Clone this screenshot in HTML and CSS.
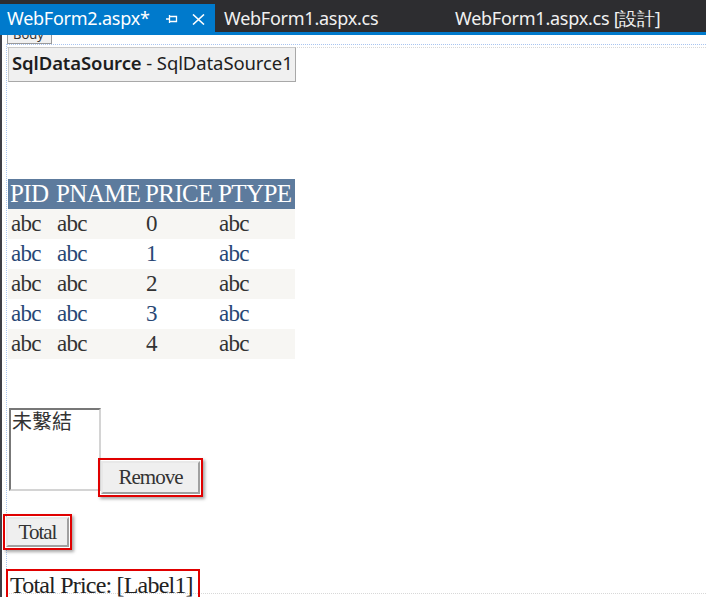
FILE: index.html
```
<!DOCTYPE html>
<html>
<head>
<meta charset="utf-8">
<link rel="stylesheet" href="styles.css">
</head>
<body>
<div class="tabbar">
  <div class="tab tab-active">
    <span class="tab-title">WebForm2.aspx*</span>
    <svg class="pin" width="12" height="10" viewBox="0 0 12 10"><path d="M0 5h3M3.5 1v8M4 2.5h6.5v5H4" fill="none" stroke="#fff" stroke-width="1.3"/></svg>
    <svg class="close" width="13" height="11" viewBox="0 0 13 11"><path d="M1 0.5L12 10.5M12 0.5L1 10.5" stroke="#fff" stroke-width="1.6" fill="none"/></svg>
  </div>
  <div class="tab tab-two">WebForm1.aspx.cs</div>
  <div class="tab tab-three">WebForm1.aspx.cs [設計]</div>
</div>
<div class="designer">
  <div class="tag-body"><span class="tag-text">Body</span></div>
  <div class="surface">
    <div class="surface-inner">
      <div class="sqlds"><b>SqlDataSource</b> - SqlDataSource1</div>
      <table class="grid">
        <colgroup><col class="c1"><col class="c2"><col class="c3"><col class="c4"></colgroup>
        <tr class="head"><th>PID</th><th>PNAME</th><th>PRICE</th><th>PTYPE</th></tr>
        <tr class="odd"><td>abc</td><td>abc</td><td>0</td><td>abc</td></tr>
        <tr class="even"><td>abc</td><td>abc</td><td>1</td><td>abc</td></tr>
        <tr class="odd"><td>abc</td><td>abc</td><td>2</td><td>abc</td></tr>
        <tr class="even"><td>abc</td><td>abc</td><td>3</td><td>abc</td></tr>
        <tr class="odd"><td>abc</td><td>abc</td><td>4</td><td>abc</td></tr>
      </table>
      <div class="list-row">
        <div class="listbox">未繫結</div>
        <span class="sel sel-remove"><span class="btn btn-remove">Remove</span></span>
      </div>
      <div class="total-row">
        <span class="sel sel-total"><span class="btn btn-total">Total</span></span>
      </div>
      <div class="label-row">
        <span class="sel sel-label">Total Price: [Label1]</span>
      </div>
    </div>
  </div>
</div>
</body>
</html>
```
FILE: styles.css
```
html, body {
  margin: 0;
  padding: 0;
  background: #fff;
}
body {
  width: 706px;
  height: 597px;
  overflow: hidden;
  font-family: "Noto Sans", sans-serif;
}
.tabbar {
  position: relative;
  z-index: 2;
  height: 32px;
  background: #2d2d30;
  border-bottom: 3px solid #007acc;
  display: flex;
  align-items: flex-end;
}
.tab {
  height: 28px;
  box-sizing: border-box;
  color: #f1f1f1;
  font-size: 18px;
  letter-spacing: -0.25px;
  line-height: 28px;
  white-space: nowrap;
}
.tab-active {
  width: 215px;
  background: #007acc;
  padding-left: 7px;
  display: flex;
  align-items: center;
  color: #fff;
}
.tab-title {
  line-height: 28px;
}
.pin {
  margin-left: 16px;
  margin-top: 2px;
}
.close {
  margin-left: 14px;
  margin-top: 2px;
}
.tab-two {
  width: 231px;
  padding-left: 9px;
}
.tab-three {
  padding-left: 9px;
}
.designer {
  position: relative;
  height: 562px;
  border-left: 2px solid #3f3f46;
  padding-left: 4px;
  padding-top: 9px;
  box-sizing: border-box;
}
.tag-body {
  position: absolute;
  left: 5px;
  top: 0;
  width: 45px;
  height: 9px;
  box-sizing: border-box;
  border: 1px solid #9a9a9a;
  border-top: none;
  background: #f0f0f0;
  overflow: hidden;
  z-index: 1;
}
.tag-text {
  display: block;
  margin-top: -8px;
  padding-left: 5px;
  font-size: 13px;
  line-height: 14px;
  color: #333;
}
.surface {
  position: relative;
  border-top: 1px dotted #a8c4f0;
  border-left: 1px dotted #a8c4f0;
  height: 553px;
  box-sizing: border-box;
}
.surface-inner {
  margin-top: 2px;
  border-top: 1px dotted #d8d8d8;
  border-bottom: 1px dotted #d8d8d8;
  height: 547px;
  box-sizing: border-box;
}
.sqlds {
  margin-top: -1px;
  margin-left: 1px;
  width: 288px;
  height: 35px;
  box-sizing: border-box;
  background: #f0f0f0;
  border: 1px solid #c8c8c8;
  border-right-color: #a8a8a8;
  border-bottom-color: #a8a8a8;
  font-size: 18.5px;
  letter-spacing: -0.1px;
  line-height: 29px;
  padding-left: 3px;
  color: #1e1e1e;
  white-space: nowrap;
}
.sqlds b {
  font-weight: 600;
}
.grid {
  margin-top: 97px;
  margin-left: 1px;
  border-collapse: collapse;
  table-layout: fixed;
  width: 287px;
  font-family: "Liberation Serif", serif;
}
.c1 { width: 46px; }
.c2 { width: 89px; }
.c3 { width: 73px; }
.c4 { width: 79px; }
.grid th, .grid td {
  padding: 0 0 0 3px;
  text-align: left;
  white-space: nowrap;
  overflow: visible;
  height: 30px;
}
.grid th {
  font-weight: normal;
  font-size: 25px;
  letter-spacing: -0.6px;
  color: #fff;
  background: #5d7b9d;
  line-height: 30px;
  padding-left: 2px;
}
.grid td {
  font-size: 23px;
  letter-spacing: -0.7px;
  line-height: 30px;
}
.odd {
  background: #f7f6f3;
  color: #333333;
}
.even {
  background: #fff;
  color: #284775;
}
.list-row {
  display: flex;
  align-items: flex-start;
  margin-top: 49px;
}
.listbox {
  margin-left: 2px;
  width: 92px;
  height: 83px;
  box-sizing: border-box;
  border: 2px solid #d4d4d4;
  border-top-color: #777;
  border-left-color: #777;
  font-family: "Noto Sans CJK TC", sans-serif;
  font-size: 20px;
  line-height: 22px;
  color: #333;
  padding-left: 1px;
}
.sel {
  display: inline-block;
  border: 2px solid #e00000;
  box-sizing: border-box;
  box-shadow: 2px 2px 3px rgba(0, 0, 0, 0.35);
}
.sel-remove {
  margin-left: -3px;
  margin-top: 50px;
  width: 105px;
  height: 39px;
  padding: 1px;
}
.btn {
  display: block;
  height: 100%;
  box-sizing: border-box;
  background: #efefef;
  border: 2px solid #a0a0a0;
  border-top-color: #e8e8e8;
  border-left-color: #e8e8e8;
  font-family: "Liberation Serif", serif;
  font-size: 21px;
  letter-spacing: -1px;
  color: #333;
  text-align: center;
}
.btn-remove {
  line-height: 28px;
}
.total-row {
  margin-top: 17px;
}
.sel-total {
  margin-left: -4px;
  width: 69px;
  height: 36px;
  padding: 1px;
}
.btn-total {
  line-height: 27px;
}
.label-row {
  margin-top: 19px;
}
.sel-label {
  margin-left: -1px;
  width: 194px;
  height: 32px;
  padding-left: 2px;
  font-family: "Liberation Serif", serif;
  font-size: 24px;
  letter-spacing: -0.8px;
  line-height: 28px;
  color: #222;
  white-space: nowrap;
  box-shadow: none;
}
```
